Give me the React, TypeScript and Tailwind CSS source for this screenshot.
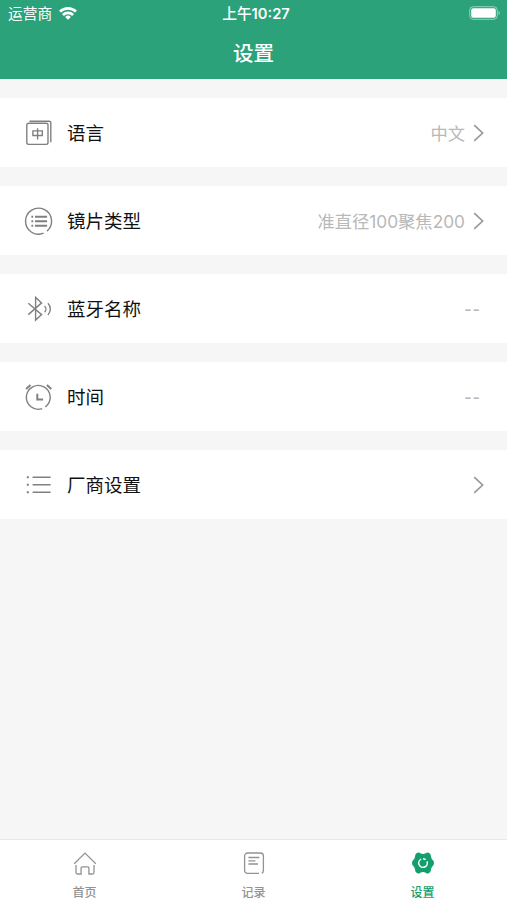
import type { ReactNode } from "react";

type Row = {
  label: string;
  value?: string;
  arrow?: boolean;
  icon: ReactNode;
};

const rows: Row[] = [
  {
    label: "语言",
    value: "中文",
    arrow: true,
    icon: (
      <>
        <rect x="2.8" y="5.2" width="21.2" height="21.2" rx="1.8" />
        <path d="M5.5 3.2H25a1.8 1.8 0 0 1 1.8 1.8v19.2" />
        <path d="M8.9 12.9h9.4v4.6H8.9zM13.6 10.3v11.2" />
      </>
    ),
  },
  {
    label: "镜片类型",
    value: "准直径100聚焦200",
    arrow: true,
    icon: (
      <>
        <path d="M19.6 27.2A13 13 0 1 1 23 25.1" />
        <path strokeWidth="2" d="M11 10.7h12.1M11 15.2h12.1M11 19.8h12.1" />
        <path strokeWidth="2" d="M7.4 10.7h1.8M7.4 15.2h1.8M7.4 19.8h1.8" />
      </>
    ),
  },
  {
    label: "蓝牙名称",
    value: "--",
    icon: (
      <>
        <path d="M4.3 9.2 17.6 20.6 11.6 26.1V3.4l6 5.5L4.3 20.6" />
        <path d="M20.6 12a4.4 4.4 0 0 1 0 6.2M23.9 9.2a8.4 8.4 0 0 1 0 11.8" />
      </>
    ),
  },
  {
    label: "时间",
    value: "--",
    icon: (
      <>
        <path d="M18.2 26.6A11.9 11.9 0 1 1 21.4 24.9" />
        <path strokeWidth="2" d="M13.3 11.8v5.6h5.8" />
        <path strokeWidth="2" d="M2.1 6.9 6.5 3M22.9 3l4.4 3.9" />
      </>
    ),
  },
  {
    label: "厂商设置",
    arrow: true,
    icon: (
      <>
        <path d="M8.6 7.2h18M8.6 14.7h18M8.6 22.2h18" />
        <path strokeWidth="2" d="M2.8 7.2h2M2.8 14.7h2M2.8 22.2h2" />
      </>
    ),
  },
];

function StatusBar() {
  return (
    <div className="grid h-7 grid-cols-3 items-center pl-2 pr-1.5 text-[14.7px] leading-7">
      <div className="flex items-center gap-[7px]">
        <span>运营商</span>
        <svg className="-mt-0.5" width="18" height="13" viewBox="0 0 18 13" fill="none" stroke="currentColor" strokeWidth="2.7">
          <path d="M1 4.6a11.6 11.6 0 0 1 16 0M3.9 7.9a7.4 7.4 0 0 1 10.2 0" />
          <path d="M9 12.8 6.1 9.9a4.2 4.2 0 0 1 5.8 0z" fill="currentColor" stroke="none" />
        </svg>
      </div>
      <span className="pl-[3px] text-center font-medium">
        上午<span className="font-semibold">10:27</span>
      </span>
      <svg className="-mt-0.5 justify-self-end" width="32" height="14" viewBox="0 0 32 14" fill="none">
        <rect x="0.7" y="0.7" width="27.6" height="12.6" rx="3.6" stroke="#fff" strokeOpacity="0.5" />
        <rect x="2.2" y="2.2" width="24.6" height="9.6" rx="2" fill="#fff" />
        <path d="M29.6 5c1.5.5 1.5 3.5 0 4z" fill="#fff" fillOpacity="0.6" />
      </svg>
    </div>
  );
}

function SettingRow({ label, value, arrow, icon }: Row) {
  return (
    <div className="flex h-[69px] items-center bg-white pl-6 pr-[23px]">
      <svg
        className="shrink-0 text-[#808080]"
        width="29"
        height="29"
        viewBox="0 0 29 29"
        fill="none"
        stroke="currentColor"
        strokeWidth="1.4"
      >
        {icon}
      </svg>
      <span className="ml-3.5 pt-[3px] text-[18.5px] text-[#111]">{label}</span>
      {arrow ? (
        <span className="ml-auto pt-[3px] text-[17.3px] text-[#b8b8b8]">{value}</span>
      ) : (
        <span className="ml-auto mr-[3px] font-['Liberation_Sans',sans-serif] text-[21px] tracking-[1.2px] text-[#b8b8b8]">
          {value}
        </span>
      )}
      {arrow && (
        <svg className="ml-2" width="11" height="18" viewBox="0 0 11 18" fill="none" stroke="#999" strokeWidth="1.7">
          <path d="M1.2 1.2 9.6 9l-8.4 7.8" />
        </svg>
      )}
    </div>
  );
}

function Tab({ label, active, children }: { label: string; active?: boolean; children: ReactNode }) {
  return (
    <div
      className={
        active
          ? "flex flex-1 flex-col items-center pt-[11px] text-[#159e6d]"
          : "flex flex-1 flex-col items-center pt-[11px] text-[#929292]"
      }
    >
      <svg
        className="shrink-0"
        width="24"
        height="24"
        viewBox="0 0 24 24"
        fill="none"
        stroke="currentColor"
        strokeWidth="1.3"
      >
        {children}
      </svg>
      <span className="mt-2.5 text-[12px] font-medium leading-4">{label}</span>
    </div>
  );
}

export default function App() {
  return (
    <div className="flex h-[900px] w-[507px] flex-col bg-[#f6f6f6] font-[Inter,'Noto_Sans_CJK_SC',sans-serif]">
      <header className="h-[79px] bg-[#2ca27a] text-white">
        <StatusBar />
        <h1 className="text-center text-[20.5px] font-medium leading-[51px]">设置</h1>
      </header>

      <main className="flex flex-1 flex-col gap-[19px] pt-[19px]">
        {rows.map((row) => (
          <SettingRow key={row.label} {...row} />
        ))}
      </main>

      <nav className="flex h-[61px] border-t border-[#e9e9e9] bg-white">
        <Tab label="首页">
          <path d="M1.2 12.8 12 2.1l10.8 10.7" />
          <path d="M3 14.1v7.4q0 1.5 1.5 1.5h3.6v-6.2q0-1 1-1h5.8q1 0 1 1V23h3.6q1.5 0 1.5-1.5v-7.4" />
        </Tab>
        <Tab label="记录">
          <path d="M17 22.4H5.6a3 3 0 0 1-3-3V5a3 3 0 0 1 3-3h12.8a3 3 0 0 1 3 3v14.4q0 2-1.6 2.7" />
          <path d="M6.4 6.5h11M6.4 9.8h7M6.4 13h9.6" />
        </Tab>
        <Tab label="设置" active>
          <path
            d="M6.4 1.7Q8 1 9.3 2.3Q12 3.5 14.7 2.3Q16 1 17.6 1.7L18.8 2.5Q20 3.6 19.9 5.3Q20.2 7.8 22 9.3Q23 10.4 23 12T22 14.7Q20.2 16.2 19.9 18.7Q20 20.4 18.8 21.5L17.6 22.3Q16 23 14.7 21.7Q12 20.5 9.3 21.7Q8 23 6.4 22.3L5.2 21.5Q4 20.4 4.1 18.7Q3.8 16.2 2 14.7Q1 13.6 1 12T2 9.3Q3.8 7.8 4.1 5.3Q4 3.6 5.2 2.5Z"
            fill="currentColor"
            stroke="none"
          />
          <path d="M10.2 8.1a4.3 4.3 0 1 0 5.8 2.3M12 7.7a4.3 4.3 0 0 1 2.6.9" stroke="#fff" strokeWidth="1.5" />
        </Tab>
      </nav>
    </div>
  );
}
